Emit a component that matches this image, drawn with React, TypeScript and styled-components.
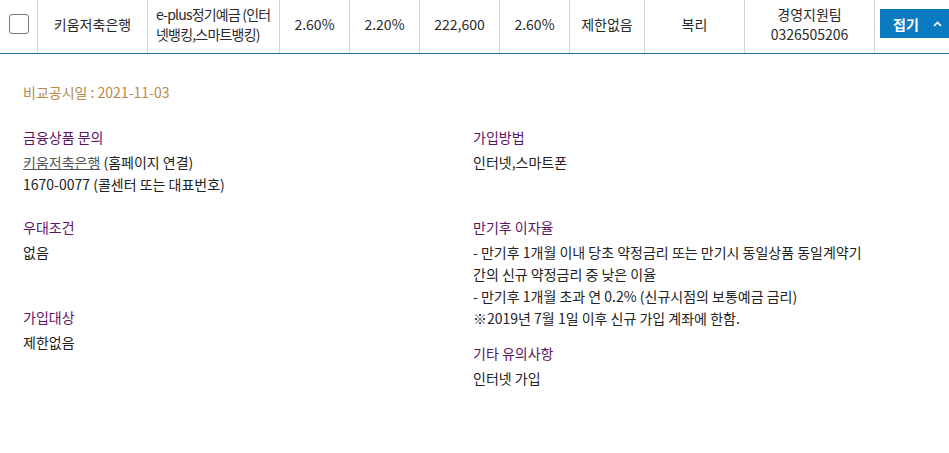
import React from "react";
import styled, { createGlobalStyle } from "styled-components";

const GlobalStyle = createGlobalStyle`
  html, body {
    margin: 0;
    padding: 0;
    background: #fff;
    overflow: hidden;
  }
  body {
    font-family: "Noto Sans CJK KR", "Noto Sans", sans-serif;
    font-size: 14px;
    color: #222;
  }
`;

const columns = [38, 110, 132, 70, 70, 80, 70, 75, 100, 130, 74];

const Row = styled.div`
  display: grid;
  grid-template-columns: ${columns.map((c) => `${c}px`).join(" ")};
  height: 53px;
  border-bottom: 1px solid #1f73a6;
  overflow: hidden;
`;

const Cell = styled.div<{ $align?: "left" | "center"; $last?: boolean; $tight?: boolean }>`
  display: flex;
  align-items: center;
  justify-content: ${(p) => (p.$align === "left" ? "flex-start" : "center")};
  text-align: ${(p) => p.$align || "center"};
  padding: 2px 4px 8px ${(p) => (p.$last ? "5px" : p.$align === "left" ? "8px" : "4px")};
  border-right: ${(p) => (p.$last ? "none" : "1px solid #d6d6d6")};
  line-height: 20px;
  letter-spacing: ${(p) => (p.$tight ? "-0.8px" : "normal")};
  color: #2a2a2a;
  white-space: nowrap;
  box-sizing: border-box;
  overflow: ${(p) => (p.$last ? "visible" : "hidden")};
`;

const Check = styled.span`
  width: 20px;
  height: 20px;
  box-sizing: border-box;
  border: 1px solid #7a7a7a;
  border-radius: 3px;
  background: #fff;
`;

const FoldButton = styled.button`
  display: flex;
  align-items: center;
  gap: 14px;
  height: 29px;
  width: 80px;
  flex-shrink: 0;
  padding: 0 0 0 13px;
  border: none;
  background: #0a7bc1;
  color: #fff;
  font-family: inherit;
  font-size: 14px;
  font-weight: 700;
  cursor: pointer;
`;

const Detail = styled.section`
  padding: 27px 23px 0;
`;

const DateLine = styled.div`
  color: #b8894a;
  line-height: 22px;
  margin-bottom: 23px;
`;

const Columns = styled.div`
  display: grid;
  grid-template-columns: 450px 1fr;
`;

const Item = styled.div`
  min-height: 77px;
  margin-bottom: 13px;
`;

const Title = styled.div`
  color: #5c1463;
  line-height: 22px;
`;

const Body = styled.div`
  margin-top: 3px;
  line-height: 22px;
  color: #222;
`;

const BankLink = styled.a`
  color: #555;
  text-decoration: underline;
`;

const Chevron = () => (
  <svg width="9" height="6" viewBox="0 0 9 6" fill="none">
    <path d="M1 5 L4.5 1.5 L8 5" stroke="#fff" strokeWidth="1.6" />
  </svg>
);

export default function App() {
  return (
    <>
      <GlobalStyle />
      <Row>
        <Cell>
          <Check />
        </Cell>
        <Cell>키움저축은행</Cell>
        <Cell $align="left" $tight>
          e-plus정기예금 (인터
          <br />
          넷뱅킹,스마트뱅킹)
        </Cell>
        <Cell>2.60%</Cell>
        <Cell>2.20%</Cell>
        <Cell>222,600</Cell>
        <Cell>2.60%</Cell>
        <Cell>제한없음</Cell>
        <Cell>복리</Cell>
        <Cell>
          경영지원팀
          <br />
          0326505206
        </Cell>
        <Cell $last $align="left">
          <FoldButton>
            접기 <Chevron />
          </FoldButton>
        </Cell>
      </Row>
      <Detail>
        <DateLine>비교공시일 : 2021-11-03</DateLine>
        <Columns>
          <div>
            <Item>
              <Title>금융상품 문의</Title>
              <Body>
                <BankLink href="#">키움저축은행</BankLink> (홈페이지 연결)
                <br />
                1670-0077 (콜센터 또는 대표번호)
              </Body>
            </Item>
            <Item>
              <Title>우대조건</Title>
              <Body>없음</Body>
            </Item>
            <Item>
              <Title>가입대상</Title>
              <Body>제한없음</Body>
            </Item>
          </div>
          <div>
            <Item>
              <Title>가입방법</Title>
              <Body>인터넷,스마트폰</Body>
            </Item>
            <Item>
              <Title>만기후 이자율</Title>
              <Body>
                - 만기후 1개월 이내 당초 약정금리 또는 만기시 동일상품 동일계약기
                <br />
                간의 신규 약정금리 중 낮은 이율
                <br />
                - 만기후 1개월 초과 연 0.2% (신규시점의 보통예금 금리)
                <br />
                ※2019년 7월 1일 이후 신규 가입 계좌에 한함.
              </Body>
            </Item>
            <Item>
              <Title>기타 유의사항</Title>
              <Body>인터넷 가입</Body>
            </Item>
          </div>
        </Columns>
      </Detail>
    </>
  );
}
